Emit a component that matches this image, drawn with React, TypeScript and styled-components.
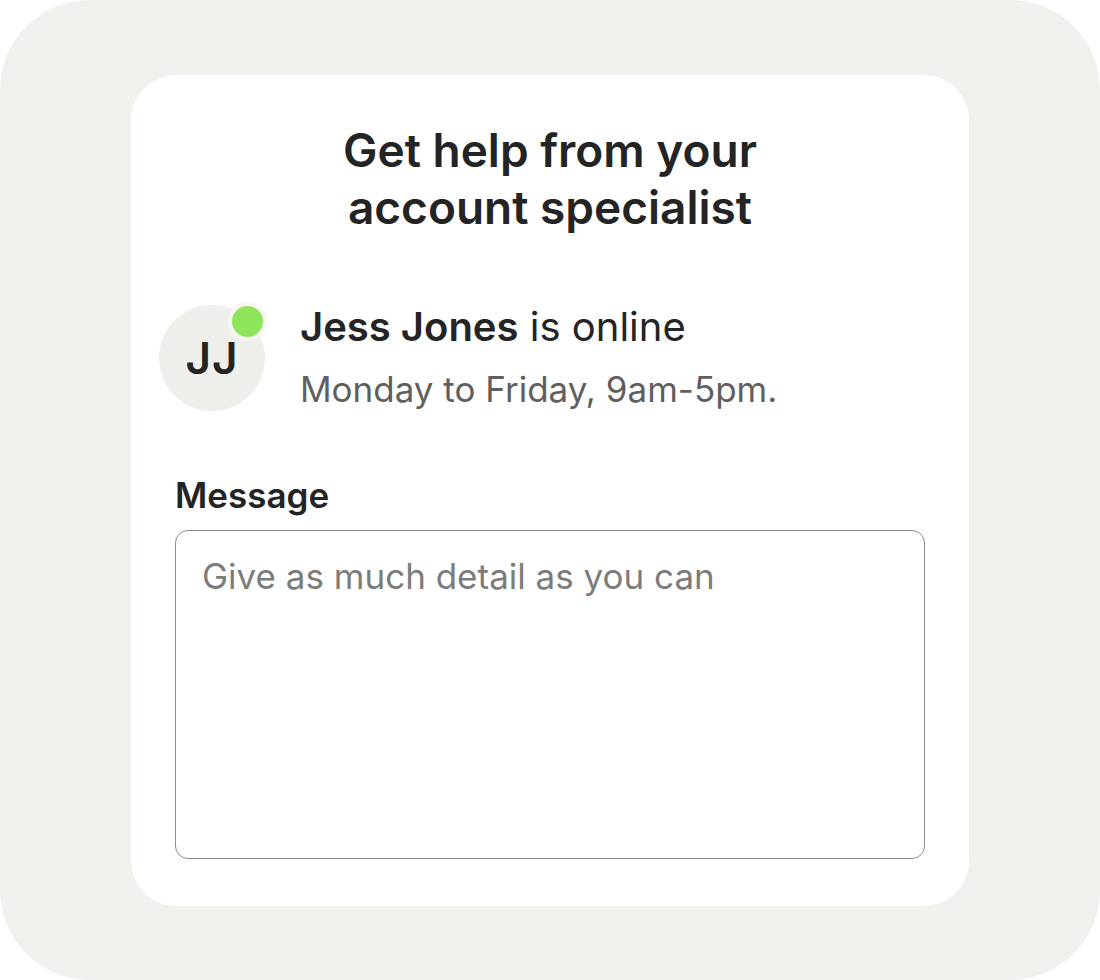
import styled, { createGlobalStyle } from "styled-components";

const GlobalStyle = createGlobalStyle`
  html, body {
    margin: 0;
    padding: 0;
    background: #ffffff;
    font-family: Inter, "Noto Sans", sans-serif;
    color: #242424;
  }
`;

const Frame = styled.div`
  width: 1100px;
  height: 980px;
  box-sizing: border-box;
  background: #f0f0ec;
  border-radius: 90px;
  display: flex;
  align-items: center;
  justify-content: center;
`;

const Card = styled.section`
  width: 838px;
  height: 831px;
  box-sizing: border-box;
  background: #ffffff;
  border-radius: 45px;
  padding: 47px 44px 47px;
  display: flex;
  flex-direction: column;
`;

const Heading = styled.h1`
  margin: 0;
  font-size: 46px;
  line-height: 57px;
  font-weight: 600;
  text-align: center;
  color: #242424;
`;

const SpecialistRow = styled.div`
  display: flex;
  align-items: flex-start;
  gap: 35px;
  margin: 69px 0 0 -16px;
`;

const Avatar = styled.div`
  position: relative;
  flex: none;
  width: 106px;
  height: 106px;
  border-radius: 50%;
  background: #eeefeb;
  display: flex;
  align-items: center;
  justify-content: center;
  font-size: 44px;
  font-weight: 600;
  color: #242424;
  letter-spacing: 1px;
`;

const StatusDot = styled.span<{ $online: boolean }>`
  position: absolute;
  top: -3px;
  right: -2px;
  width: 31px;
  height: 31px;
  border-radius: 50%;
  background: ${(p) => (p.$online ? "#8ee45a" : "#bdbdbd")};
  border: 4px solid #f6f6f3;
`;

const Details = styled.div`
  display: flex;
  flex-direction: column;
  gap: 20px;
`;

const Status = styled.p`
  margin: 0;
  font-size: 40px;
  line-height: 44px;
  font-weight: 400;
  color: #242424;

  strong {
    font-weight: 600;
  }
`;

const Hours = styled.p`
  margin: 0;
  font-size: 35px;
  line-height: 40px;
  color: #5f5f5f;
`;

const Label = styled.label`
  display: block;
  margin-top: 64px;
  font-size: 35px;
  line-height: 40px;
  font-weight: 600;
  color: #242424;
`;

const MessageBox = styled.textarea`
  margin-top: 15px;
  width: 100%;
  height: 329px;
  box-sizing: border-box;
  border: 1.5px solid #8c8c8c;
  border-radius: 13px;
  padding: 25px 26px;
  resize: none;
  font-family: Inter, "Noto Sans", sans-serif;
  font-size: 35px;
  line-height: 40px;
  color: #242424;
  background: #ffffff;
  outline: none;

  &::placeholder {
    color: #7c7c7c;
  }
`;

export default function App() {
  return (
    <>
      <GlobalStyle />
      <Frame>
        <Card>
          <Heading>
            Get help from your
            <br />
            account specialist
          </Heading>
          <SpecialistRow>
            <Avatar>
              JJ
              <StatusDot $online />
            </Avatar>
            <Details>
              <Status>
                <strong>Jess Jones</strong> is online
              </Status>
              <Hours>Monday to Friday, 9am-5pm.</Hours>
            </Details>
          </SpecialistRow>
          <Label htmlFor="message">Message</Label>
          <MessageBox id="message" placeholder="Give as much detail as you can" />
        </Card>
      </Frame>
    </>
  );
}
